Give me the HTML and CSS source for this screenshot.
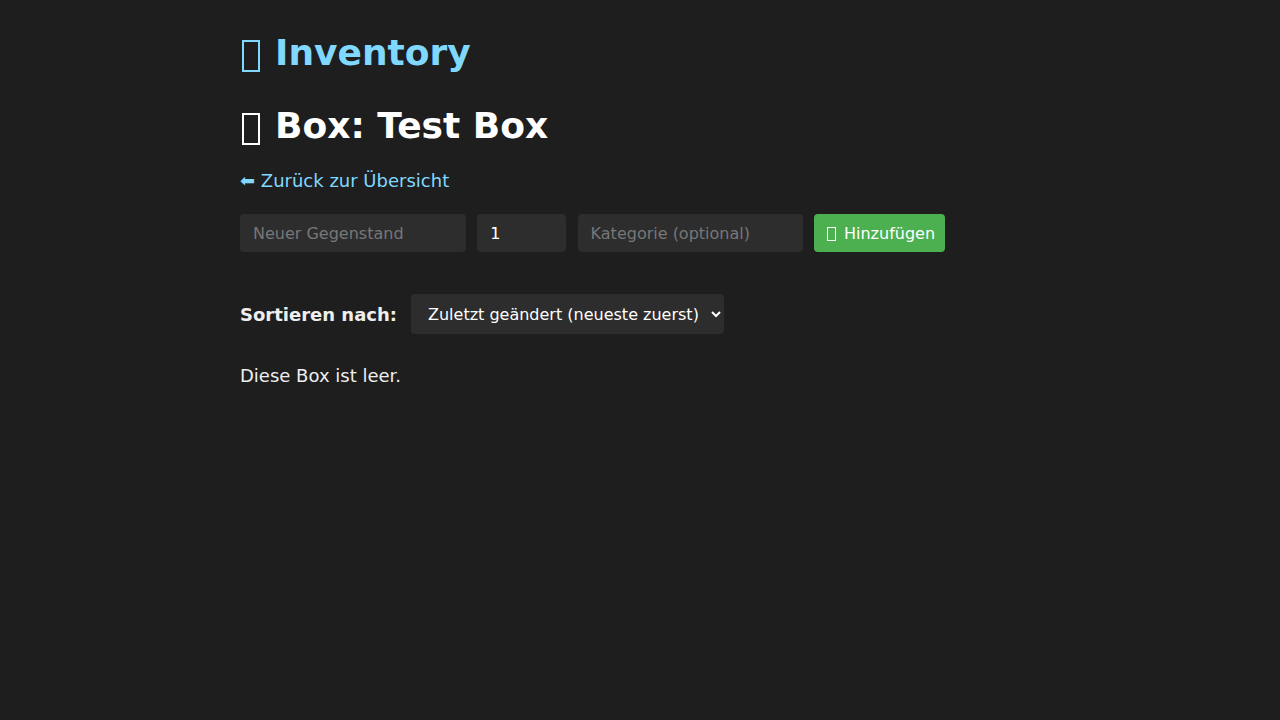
FILE: index.html
```html
<!DOCTYPE html>
<html lang="de">
<head>
<meta charset="utf-8">
<title>Inventory</title>
<link rel="stylesheet" href="styles.css">
</head>
<body>
<div class="container">
  <h1 class="title"><a href="#"><span class="tofu tofu-lg"></span> Inventory</a></h1>
  <h2 class="box-title"><span class="tofu tofu-lg"></span> Box: Test Box</h2>
  <p class="back"><a href="#">⬅ Zurück zur Übersicht</a></p>
  <form class="add-form">
    <input class="field field-name" type="text" placeholder="Neuer Gegenstand">
    <input class="field field-qty" type="number" value="1">
    <input class="field field-cat" type="text" placeholder="Kategorie (optional)">
    <button class="btn-add" type="button"><span class="tofu tofu-sm"></span> Hinzufügen</button>
  </form>
  <div class="sort">
    <label class="sort-label">Sortieren nach:</label>
    <select class="sort-select">
      <option>Zuletzt geändert (neueste zuerst)</option>
    </select>
  </div>
  <p class="empty">Diese Box ist leer.</p>
</div>
</body>
</html>
```

FILE: styles.css
```css
body {
  margin: 8px;
  background: #1e1e1e;
  color: #eeeeee;
  font-family: "DejaVu Sans", sans-serif;
  font-size: 18px;
}
.container {
  max-width: 800px;
  margin: 0 auto;
}
a {
  color: #80d8ff;
  text-decoration: none;
}
.tofu {
  display: inline-block;
  box-sizing: border-box;
  border-style: solid;
  border-color: currentColor;
}
.tofu-lg {
  width: 18px;
  height: 32px;
  border-width: 2px;
  margin: 0 2.5px 0 2px;
  vertical-align: -7px;
}
.tofu-sm {
  width: 9px;
  height: 14px;
  border-width: 1px;
  margin: 0 3px 0 0;
  vertical-align: -2px;
}
.title {
  font-size: 36px;
  margin: 24px 0;
}
.box-title {
  font-size: 36px;
  color: #ffffff;
  margin: 32px 0 24px;
}
.back {
  margin: 0 0 23px;
}
.add-form {
  display: flex;
  gap: 11.3px;
  align-items: center;
}
.field {
  font-family: "DejaVu Sans", sans-serif;
  font-size: 16px;
  background: #2d2d2d;
  color: #ffffff;
  border: none;
  border-radius: 4px;
  padding: 0 13px;
  height: 38px;
  box-sizing: border-box;
}
.field::placeholder {
  color: #777777;
}
.field-name { width: 226px; }
.field-qty { width: 89px; }
.field-cat { width: 225px; }
.btn-add {
  font-family: "DejaVu Sans", sans-serif;
  font-size: 16px;
  background: #4caf50;
  color: #ffffff;
  border: none;
  border-radius: 4px;
  height: 38px;
  padding: 0 10px 0 13px;
}
.sort {
  display: flex;
  align-items: center;
  gap: 14px;
  margin-top: 42px;
}
.sort-label {
  font-weight: bold;
}
.sort-select {
  font-family: "DejaVu Sans", sans-serif;
  font-size: 16px;
  background: #2d2d2d;
  color: #ffffff;
  border: none;
  border-radius: 4px;
  height: 40px;
  padding: 0 9px 0 13px;
}
.empty {
  margin: 31px 0;
}
```
